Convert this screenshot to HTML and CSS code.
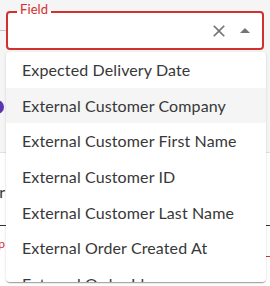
FILE: index.html
```html
<!DOCTYPE html>
<html lang="en">
<head>
    <meta charset="UTF-8">
    <meta name="viewport" content="width=device-width, initial-scale=1.0">
    <title>Field picker</title>
    <link rel="stylesheet" href="styles.css">
</head>
<body>
    <div class="screen">
        <!-- Contenido de fondo, tapado casi todo por el desplegable -->
        <div class="backdrop">
            <div class="panel">
                <div class="panel-rule"></div>
                <div class="avatar"></div>
            </div>
            <div class="form">
                <div class="value-row">
                    <div class="value-clip"><span>Customer</span></div>
                </div>
                <div class="helper">
                    <div class="value-clip"><span>Pick a field to map</span></div>
                </div>
                <div class="error-rule"></div>
            </div>
        </div>

        <div class="autocomplete">
            <fieldset class="field">
                <legend>Field</legend>
                <div class="field-row">
                    <button class="icon-btn close" aria-label="Clear">
                        <svg viewBox="0 0 24 24" width="20" height="20"><path d="M19 6.41L17.59 5 12 10.59 6.41 5 5 6.41 10.59 12 5 17.59 6.41 19 12 13.41 17.59 19 19 17.59 13.41 12z"/></svg>
                    </button>
                    <button class="icon-btn arrow" aria-label="Close">
                        <svg viewBox="0 0 24 24" width="24" height="24"><path d="M7 14l5-5 5 5z"/></svg>
                    </button>
                </div>
            </fieldset>
            <ul class="listbox">
                <li>Expected Delivery Date</li>
                <li class="focused">External Customer Company</li>
                <li>External Customer First Name</li>
                <li>External Customer ID</li>
                <li>External Customer Last Name</li>
                <li>External Order Created At</li>
                <li>External Order Id</li>
            </ul>
        </div>
    </div>
</body>
</html>
```

FILE: styles.css
```css
body {
    margin: 0;
    font-family: Lato, "Open Sans", sans-serif;
    background: #fff;
}
.screen {
    position: relative;
    width: 270px;
    height: 286px;
    overflow: hidden;
}
.panel {
    height: 152px;
    background: #f5f5f5;
    border-bottom: 1px solid #e0e0e0;
    overflow: hidden;
}
.panel-rule {
    margin-top: 30px;
    width: 12px;
    height: 1px;
    background: #c4c4c4;
}
.avatar {
    margin-top: 69px;
    margin-left: -10px;
    width: 14px;
    height: 14px;
    border-radius: 50%;
    background: #5e35b1;
}
.form {
    padding-top: 27px;
}
.value-row {
    height: 45px;
    border-bottom: 1px solid #333;
    font-size: 16px;
    line-height: 24px;
    color: #333;
}
.value-clip {
    display: flex;
    justify-content: flex-end;
    width: 5px;
    white-space: nowrap;
}
.helper {
    margin-top: 10px;
    font-size: 12px;
    line-height: 16px;
    color: #d32f2f;
}
.error-rule {
    margin-top: 4px;
    margin-left: 200px;
    height: 1px;
    background: #d32f2f;
}
.autocomplete {
    position: absolute;
    top: 2px;
    left: 6px;
    width: 260px;
}
.field {
    margin: 0;
    width: 258px;
    height: 48px;
    box-sizing: border-box;
    padding: 0 5px 0 9px;
    border: 2px solid #d32f2f;
    border-radius: 4px;
    background: #fff;
}
.field legend {
    padding: 0 3px 6px;
    font-size: 13px;
    line-height: 14px;
    letter-spacing: 0.1px;
    color: #d32f2f;
}
.field-row {
    display: flex;
    justify-content: flex-end;
    align-items: center;
    gap: 4px;
    height: 26px;
    margin-top: -4px;
}
.icon-btn {
    display: flex;
    padding: 0;
    border: 0;
    background: none;
    fill: #757575;
}
.listbox {
    list-style: none;
    margin: 2px 0 0;
    padding: 0;
    height: 230px;
    overflow: hidden;
    background: #fff;
    border-radius: 4px;
    box-shadow: 0 2px 1px -1px rgba(0,0,0,.2), 0 1px 1px 0 rgba(0,0,0,.14), 0 1px 3px 0 rgba(0,0,0,.12);
}
.listbox li {
    height: 35.7px;
    box-sizing: border-box;
    padding: 6px 16px;
    font-size: 16px;
    line-height: 24px;
    letter-spacing: 0.12px;
    color: #383838;
    white-space: nowrap;
}
.listbox li.focused {
    background: #f5f5f5;
}
```
